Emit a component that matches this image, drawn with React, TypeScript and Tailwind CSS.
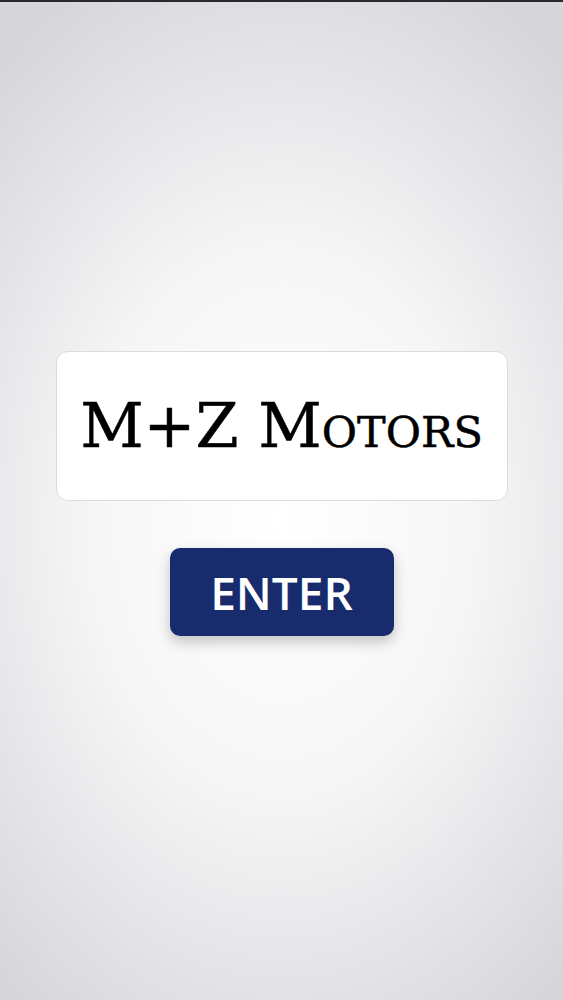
import React from 'react';

export default function App() {
  return (
    <div className="relative h-[1000px] w-full overflow-hidden border-t-2 border-[#2a2a2c] bg-[radial-gradient(ellipse_75%_60%_at_50%_52%,#ffffff_0%,#f6f6f7_45%,#d7d6da_100%)]">
      <div className="flex flex-col items-center pt-[349px]">
        <div className="flex h-[150px] w-[452px] items-center justify-center rounded-[12px] border border-[#dcdbe0] bg-white">
          <span
            className="text-[62px] leading-none text-black [-webkit-text-stroke:0.5px_black]"
            style={{ fontFamily: '"DejaVu Serif", "Liberation Serif", serif', fontVariant: 'small-caps' }}
          >
            M+Z Motors
          </span>
        </div>
        <button className="mt-[47px] flex h-[88px] w-[224px] items-center justify-center rounded-[10px] bg-[#182c6d] text-[46px] font-semibold text-white shadow-[0_6px_14px_rgba(0,0,0,0.22)] [font-family:'Open_Sans',sans-serif]">
          ENTER
        </button>
      </div>
    </div>
  );
}
